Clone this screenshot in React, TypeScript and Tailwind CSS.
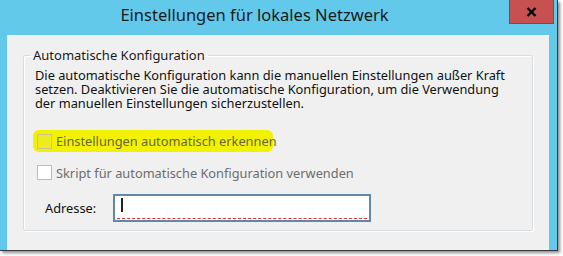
export default function App() {
  return (
    <div className="w-[563px] h-[256px] bg-white overflow-hidden" style={{ fontFamily: '"Noto Sans", "Open Sans", sans-serif' }}>
      <div className="w-[558px] h-[251px] bg-[#63c9ea] border-r border-b border-[#3b3b3b] shadow-[2px_2px_3px_rgba(0,0,0,0.45)] flex flex-col">
        {/* Title bar */}
        <div className="h-[35px] flex items-start shrink-0">
          <div className="flex-1 flex justify-center pt-[3px] text-[16.5px] leading-[24px] text-[#1b1b1b]">
            Einstellungen für lokales Netzwerk
          </div>
          <div className="w-[45px] h-[24px] mr-[3px] bg-[#c75050] border border-[#9a3c3c] border-t-0 flex items-center justify-center">
            <svg width="11" height="10" viewBox="0 0 11 10">
              <path d="M1.5 1 L9.5 9 M9.5 1 L1.5 9" stroke="#000" strokeWidth="2.4" />
            </svg>
          </div>
        </div>

        {/* Content */}
        <div className="flex-1 ml-[7px] mr-[8px] bg-[#f0f0f0] pt-[12px] px-[16px]">
          <fieldset className="h-[184px] border border-[#d5dde3] rounded-[2px] shadow-[inset_1px_1px_0_#fff,1px_1px_0_#fff] px-[11px]">
            <legend className="ml-[-5px] px-[3px] text-[13px] leading-[16px] text-[#1a1a1a]">
              Automatische Konfiguration
            </legend>
            <p className="text-[12.8px] leading-[14px] text-[#111] mt-[5px] whitespace-nowrap">
              Die automatische Konfiguration kann die manuellen Einstellungen außer Kraft
              <br />
              setzen. Deaktivieren Sie die automatische Konfiguration, um die Verwendung
              <br />
              der manuellen Einstellungen sicherzustellen.
            </p>

            <div className="mt-[20px] ml-[-2px] w-[240px] h-[22px] bg-[#f2f200] rounded-[6px] flex items-center pl-[4px] gap-[4px]">
              <div className="w-[15px] h-[15px] shrink-0 border border-[#c5c58a] bg-[#ecec20]" />
              <span className="text-[12.8px] leading-[14px] text-[#67673c] whitespace-nowrap">Einstellungen automatisch erkennen</span>
            </div>

            <div className="mt-[13px] ml-[2px] flex items-center gap-[4px]">
              <div className="w-[15px] h-[15px] shrink-0 border border-[#bcbcbc] bg-white" />
              <span className="text-[12.8px] leading-[14px] text-[#6d6d6d] whitespace-nowrap">Skript für automatische Konfiguration verwenden</span>
            </div>

            <div className="mt-[14px] ml-[10px] flex items-center">
              <span className="w-[68px] text-[12.8px] leading-[14px] text-[#111]">Adresse:</span>
              <div className="w-[258px] h-[28px] bg-white border-2 border-[#5f88ab] relative">
                <div className="absolute left-[6px] top-[2px] w-[2px] h-[14px] bg-[#222]" />
                <div className="absolute left-[2px] right-[2px] bottom-[1px] border-b border-dashed border-[#e53030]" />
              </div>
            </div>
          </fieldset>
        </div>
      </div>
    </div>
  );
}
